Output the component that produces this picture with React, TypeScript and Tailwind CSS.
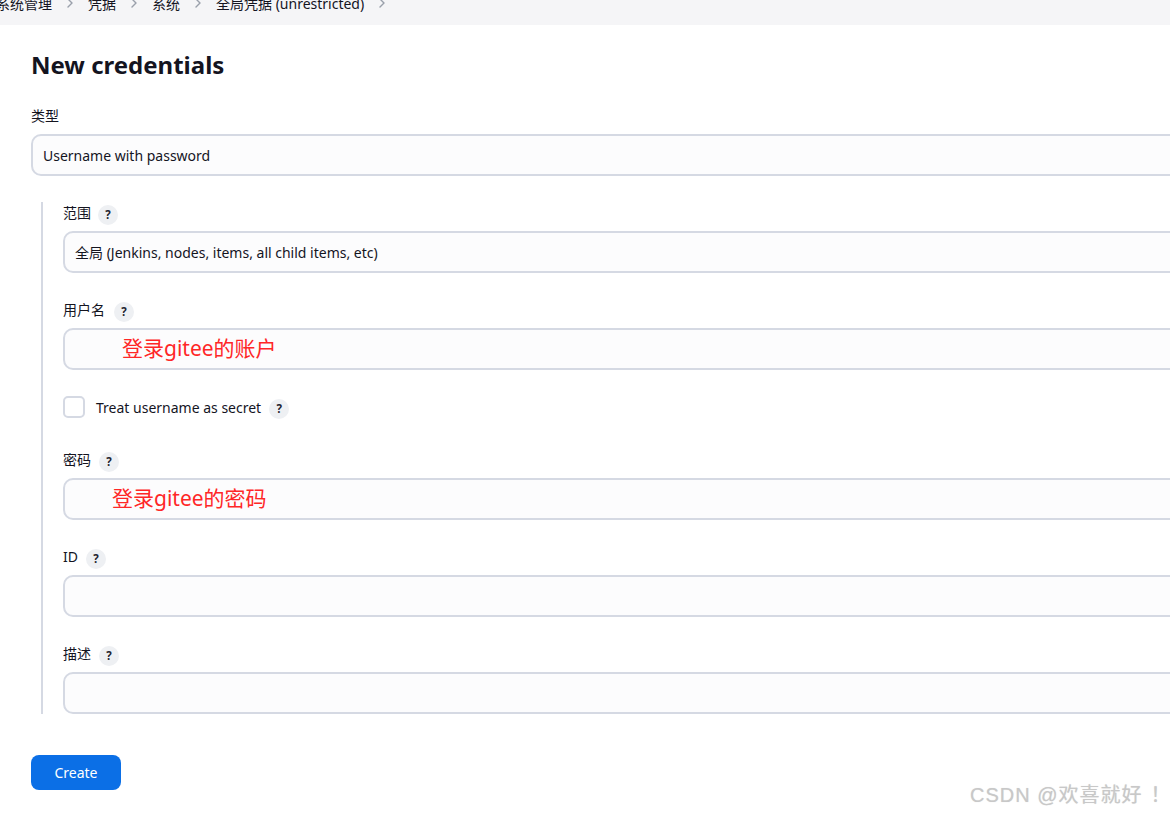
import React from "react";

const FONT = { fontFamily: '"Noto Sans", "Noto Sans CJK SC", sans-serif' };

function Help() {
  return (
    <span className="inline-flex h-[20px] w-[20px] items-center justify-center rounded-full bg-[#eef0f3] text-[11.5px] font-bold leading-none text-[#1f2430]">
      ?
    </span>
  );
}

function Label({ text, help = true, ml = "ml-[8px]" }: { text: string; help?: boolean; ml?: string }) {
  return (
    <div className="flex h-[20px] items-center">
      <span className="text-[14px] leading-none text-[#14141f]">{text}</span>
      {help && <span className={ml}><Help /></span>}
    </div>
  );
}

function Input({ children }: { children?: React.ReactNode }) {
  return (
    <div className="mt-[8px] flex h-[42px] w-[1200px] items-center rounded-[10px] border-2 border-[#d5d9e3] bg-[#fcfcfd] text-[14px] text-[#14141f]">
      {children}
    </div>
  );
}

function Chevron() {
  return (
    <svg width="8" height="10" viewBox="0 0 8 10" className="mx-[14px]">
      <path d="M2 1 L6 5 L2 9" fill="none" stroke="#9aa0ab" strokeWidth="1.4" strokeLinecap="round" strokeLinejoin="round" />
    </svg>
  );
}

export default function App() {
  return (
    <div className="relative h-[813px] w-[1170px] overflow-hidden bg-white" style={FONT}>
      <div className="h-[25px] overflow-hidden bg-[#f5f5f7]">
        <div className="-mt-[7px] ml-[-4px] flex h-[20px] items-center text-[14px] text-[#14141f]">
          <span>系统管理</span>
          <Chevron />
          <span>凭据</span>
          <Chevron />
          <span>系统</span>
          <Chevron />
          <span>全局凭据 (unrestricted)</span>
          <Chevron />
        </div>
      </div>

      <div className="pl-[31px]">
        <h1 className="mt-[24px] text-[24px] font-bold leading-[32px] text-[#14141f]">New credentials</h1>

        <div className="mt-[25px]">
          <Label text="类型" help={false} />
          <Input>
            <span className="pl-[10px]">Username with password</span>
          </Input>
        </div>

        <div className="ml-[10px] mt-[26px] border-l-2 border-[#d5d9e3] pl-[20px]">
          <div className="pt-[1px]">
            <Label text="范围" ml="ml-[7px]" />
            <Input>
              <span className="pl-[10px]">全局 (Jenkins, nodes, items, all child items, etc)</span>
            </Input>
          </div>

          <div className="mt-[27px]">
            <Label text="用户名" ml="ml-[9px]" />
            <Input>
              <span className="pl-[57px] text-[21px] text-[#ff2727]">登录gitee的账户</span>
            </Input>
          </div>

          <div className="mt-[26px] flex h-[22px] items-center">
            <span className="h-[22px] w-[22px] rounded-[5px] border-2 border-[#d5d9e3] bg-white" />
            <span className="ml-[11px] text-[14px] text-[#14141f]">Treat username as secret</span>
            <span className="ml-[8px]"><Help /></span>
          </div>

          <div className="mt-[32px]">
            <Label text="密码" ml="ml-[8px]" />
            <Input>
              <span className="pl-[47px] text-[21px] text-[#ff2727]">登录gitee的密码</span>
            </Input>
          </div>

          <div className="mt-[27px]">
            <Label text="ID" ml="ml-[8px]" />
            <Input />
          </div>

          <div className="mt-[27px]">
            <Label text="描述" ml="ml-[8px]" />
            <Input />
          </div>
        </div>

        <button className="mt-[41px] flex h-[35px] w-[90px] items-center justify-center rounded-[8px] bg-[#0b6fe6] text-[14px] text-white">
          Create
        </button>
      </div>

      <div
        className="absolute left-[970px] top-[780px] flex whitespace-nowrap text-[20px] tracking-[1px] text-[#c8c8c8]"
        style={{ fontFamily: '"Liberation Sans", "Noto Sans CJK SC", sans-serif', textShadow: "0 0 1px rgba(0,0,0,0.15)" }}
      >
        <span>CSDN @欢喜就好</span>
        <span className="ml-[8px]">！</span>
      </div>
    </div>
  );
}
